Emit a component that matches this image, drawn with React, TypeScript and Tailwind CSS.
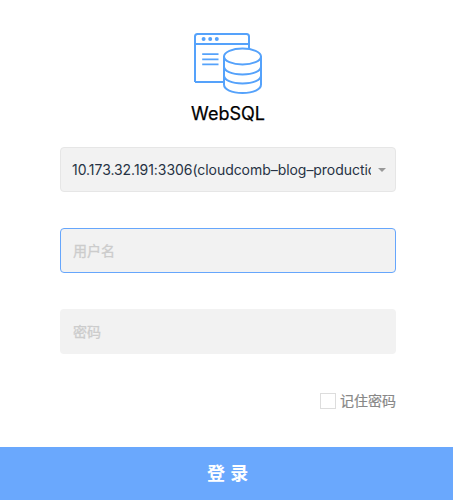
function Logo() {
  return (
    <svg width="70" height="63" viewBox="193 32 70 63" fill="none" stroke="#55a2fb" strokeWidth="2" className="block">
      <path d="M195 82V36.500Q195 34 197.500 34H246.500Q249 34 249 36.500V49M195 82H224M195 44H249" />
      <g fill="#55a2fb" stroke="none">
        <circle cx="203.600" cy="39" r="2" />
        <circle cx="210.200" cy="39" r="2" />
        <circle cx="216.800" cy="39" r="2" />
      </g>
      <path d="M202.200 54.200H218.500M202.200 59.300H218.500M202.200 64.400H218.500" strokeWidth="1.700" />
      <ellipse cx="242.500" cy="56.500" rx="18.500" ry="8" />
      <path d="M224 56.500V84.500C224 89.500 231.500 93 242.500 93S261 89.500 261 84.500V56.500" />
      <path d="M224 66.500C224 71 231.500 74.500 242.500 74.500S261 71 261 66.500M224 75.500C224 80 231.500 83.500 242.500 83.500S261 80 261 75.500" />
    </svg>
  );
}

export default function App() {
  return (
    <form className="flex h-[500px] w-[453px] flex-col bg-white font-['Inter','Noto_Sans_CJK_SC',sans-serif]">
      <header className="flex flex-col items-center pt-8 pl-[3px]">
        <Logo />
        <h1 className="mt-[7px] text-[18px] leading-6 text-black [-webkit-text-stroke:0.25px_black]">WebSQL</h1>
      </header>
      <div className="mt-[21px] ml-[60px] flex w-[336px] flex-col gap-9">
        <div className="flex h-[45px] items-center rounded border border-[#e6e6e6] bg-[#f2f2f2] pl-[11px]">
          <span className="w-[299px] overflow-hidden text-[14px] leading-5 tracking-[-0.05px] whitespace-nowrap text-[#273244]">
            10.173.32.191:3306(cloudcomb–blog–production)
          </span>
          <span className="ml-[7px] border-x-4 border-t-4 border-x-transparent border-t-[#999]" />
        </div>
        <input
          placeholder="用户名"
          className="h-[45px] rounded border border-[#66a6fc] bg-[#f2f2f2] px-3 text-[14px] outline-none placeholder:text-[#ccc] placeholder:[-webkit-text-stroke:0.3px_#ccc]"
        />
        <input
          type="password"
          placeholder="密码"
          className="h-[45px] rounded bg-[#f2f2f2] px-[13px] text-[14px] outline-none placeholder:text-[#ccc] placeholder:[-webkit-text-stroke:0.3px_#ccc]"
        />
      </div>
      <label className="mt-[37px] ml-[320px] flex h-5 items-center gap-1 text-[14px] text-[#888]">
        <input type="checkbox" className="size-4 appearance-none border border-[#ddd] bg-white" />
        <span className="leading-5 [-webkit-text-stroke:0.2px_#888]">记住密码</span>
      </label>
      <button type="button" className="mt-auto h-[53px] w-full bg-[#6aa8fd] pl-[3px] text-[18px] font-bold tracking-[0.5px] text-white">
        登 录
      </button>
    </form>
  );
}
